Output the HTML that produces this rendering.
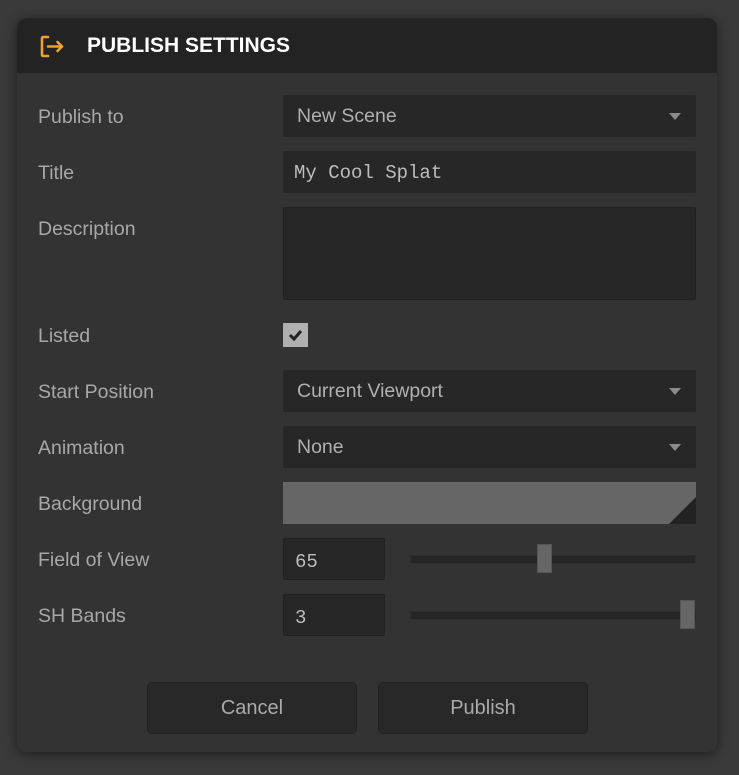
<!DOCTYPE html>
<html><head><meta charset="utf-8"><style>
*{box-sizing:border-box;margin:0;padding:0}
body{width:739px;height:775px;background:#3a3a3a;font-family:"Liberation Sans",Arial,sans-serif;position:relative;overflow:hidden}
.dlg{position:absolute;left:17px;top:18px;width:700px;height:734px;background:#333;border-radius:10px;overflow:hidden;box-shadow:0 2px 12px rgba(0,0,0,.5)}
.hdr{position:absolute;left:0;top:0;width:700px;height:55px;background:#232323}
.hdr .t{position:absolute;left:70px;top:16px;font-size:21px;font-weight:bold;color:#fff}
.lbl{position:absolute;left:21px;font-size:19.5px;color:#a8a8a8}
.box{position:absolute;background:#272727;border-radius:2px;color:#b0b0b0;font-size:19.5px}
.sel{left:266px;width:413px;height:42px;padding:10px 14px}
.sel:after{content:"";position:absolute;right:15px;top:18px;border-left:6px solid transparent;border-right:6px solid transparent;border-top:7px solid #8a8a8a}
.mono{font-family:"Liberation Mono","DejaVu Sans Mono",monospace;font-size:19px;color:#bdbdbd}
.track{position:absolute;left:393px;width:286px;height:9px;background:#262626;border:1px solid #2e2e2e}
.thumb{position:absolute;width:15px;height:29px;background:#666;border:1px solid #555}
.btn{position:absolute;top:664px;width:210px;height:52px;background:#282828;border:1px solid #222;border-radius:5px;color:#aaa;font-size:20px;text-align:center;line-height:50px}
</style></head><body>
<div class="dlg">
<div class="hdr">
<svg style="position:absolute;left:22px;top:16px" width="26" height="25" viewBox="0 0 26 25"><path d="M9 3H4.5Q3 3 3 4.5V20.5Q3 22 4.5 22H9" fill="none" stroke="#f0a030" stroke-width="2.6" stroke-linecap="round"/><path d="M9 12.5H23M18.5 8L23 12.5L18.5 17" fill="none" stroke="#f0a030" stroke-width="2.6" stroke-linecap="round" stroke-linejoin="round"/></svg>
<div class="t">PUBLISH SETTINGS</div></div>

<div class="lbl" style="top:88px">Publish to</div>
<div class="box sel" style="top:77px">New Scene</div>

<div class="lbl" style="top:144px">Title</div>
<div class="box mono" style="left:266px;top:133px;width:413px;height:42px;padding:11px 11px">My Cool Splat</div>

<div class="lbl" style="top:200px">Description</div>
<div class="box" style="left:266px;top:189px;width:413px;height:93px;border:1px solid #222"></div>

<div class="lbl" style="top:307px">Listed</div>
<div style="position:absolute;left:266px;top:305px;width:25px;height:24px;background:#b0b0b0">
<svg width="25" height="24" viewBox="0 0 25 24"><path d="M7 12L11 16L18 8" fill="none" stroke="#222" stroke-width="3"/></svg></div>

<div class="lbl" style="top:363px">Start Position</div>
<div class="box sel" style="top:352px">Current Viewport</div>

<div class="lbl" style="top:419px">Animation</div>
<div class="box sel" style="top:408px">None</div>

<div class="lbl" style="top:475px">Background</div>
<div style="position:absolute;left:266px;top:464px;width:413px;height:42px;background:#666;overflow:hidden">
<div style="position:absolute;right:0;bottom:0;width:0;height:0;border-left:27px solid transparent;border-bottom:27px solid #222"></div></div>

<div class="lbl" style="top:531px">Field of View</div>
<div class="box mono" style="left:266px;top:520px;width:102px;height:42px;padding:12px 11px;border:1px solid #222">65</div>
<div class="track" style="top:537px"></div>
<div class="thumb" style="left:520px;top:526px"></div>

<div class="lbl" style="top:587px">SH Bands</div>
<div class="box mono" style="left:266px;top:576px;width:102px;height:42px;padding:12px 11px;border:1px solid #222">3</div>
<div class="track" style="top:593px"></div>
<div class="thumb" style="left:663px;top:582px"></div>

<div class="btn" style="left:130px">Cancel</div>
<div class="btn" style="left:361px">Publish</div>
</div>
</body></html>
